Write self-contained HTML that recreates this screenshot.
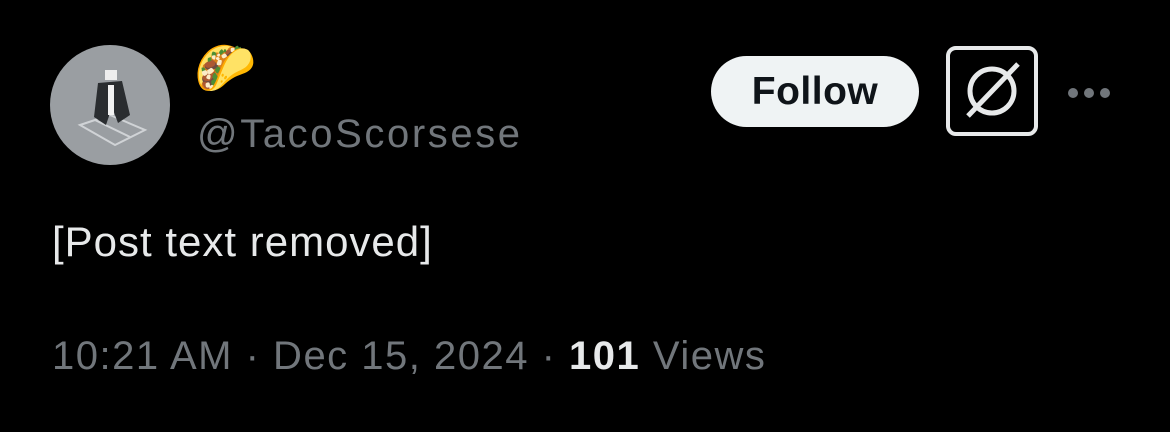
<!DOCTYPE html>
<html>
<head>
<meta charset="utf-8">
<style>
  html,body{margin:0;padding:0;background:#000;}
  body{width:1170px;height:432px;position:relative;overflow:hidden;font-family:"Liberation Sans",sans-serif;}
  .avatar{position:absolute;left:50px;top:45px;width:120px;height:120px;border-radius:50%;background:#9a9ea2;overflow:hidden;}
  .emoji{position:absolute;left:194px;top:44px;font-size:50px;line-height:1;font-family:"Noto Color Emoji","DejaVu Sans",sans-serif;}
  .handle{position:absolute;left:197px;top:112px;font-size:40px;letter-spacing:2.6px;color:#71767b;}
  .follow{position:absolute;left:711px;top:56px;width:208px;height:71px;border-radius:36px;background:#eff3f4;color:#0f1419;font-weight:bold;font-size:39px;letter-spacing:0.5px;display:flex;align-items:center;justify-content:center;}
  .grok{position:absolute;left:946px;top:46px;width:84px;height:82px;border:4px solid #e7e9ea;border-radius:10px;}
  .dots{position:absolute;left:1068px;top:88px;}
  .dots span{position:absolute;top:0;width:10px;height:10px;border-radius:50%;background:#71767b;}
  .text{position:absolute;left:52px;top:218px;font-size:42px;letter-spacing:1px;color:#e7e9ea;}
  .meta{position:absolute;left:52px;top:334px;font-size:40px;letter-spacing:1.5px;color:#71767b;}
  .meta b{color:#e7e9ea;}
</style>
</head>
<body>
  <div class="avatar">
    <svg width="120" height="120" viewBox="0 0 120 120">
      <g stroke="#d0d3d6" stroke-width="2" fill="none">
        <path d="M30 80 L60 70 L95 85 L65 100 Z"/>
        <path d="M45 75 L80 92"/>
      </g>
      <path d="M55 25 h12 v10 h-12z" fill="#eee"/>
      <path d="M48 38 L72 36 L80 70 L68 78 L62 62 L56 80 L44 72 Z" fill="#2a2d30"/>
      <path d="M58 40 h6 v30 h-6z" fill="#f2f2f2"/>
    </svg>
  </div>
  <div class="emoji">🌮</div>
  <div class="handle">@TacoScorsese</div>
  <div class="follow">Follow</div>
  <div class="grok">
    <svg width="84" height="82" viewBox="0 0 84 82">
      <circle cx="42" cy="41" r="22" stroke="#e7e9ea" stroke-width="5" fill="none"/>
      <path d="M18 66 L68 14" stroke="#e7e9ea" stroke-width="5"/>
    </svg>
  </div>
  <div class="dots"><span style="left:0"></span><span style="left:16px"></span><span style="left:32px"></span></div>
  <div class="text">[Post text removed]</div>
  <div class="meta">10:21 AM · Dec 15, 2024 · <b>101</b> Views</div>
</body>
</html>
